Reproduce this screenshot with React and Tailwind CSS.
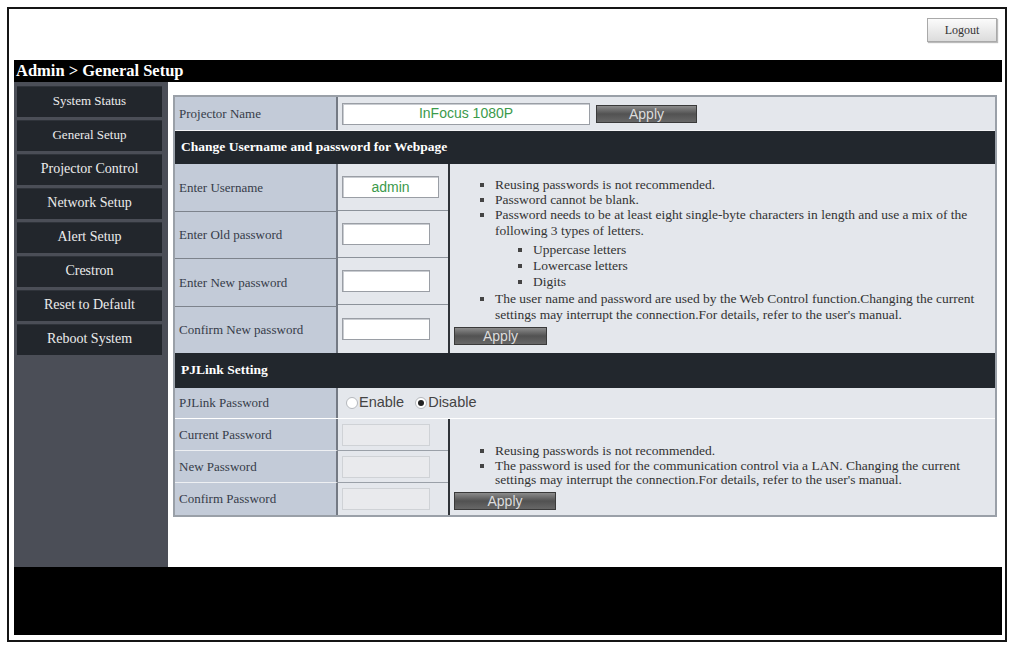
import React from "react";

const serif = { fontFamily: '"Liberation Serif", "Times New Roman", serif' };
const sans = { fontFamily: '"Liberation Sans", Arial, sans-serif' };

const menu = [
  { label: "System Status", size: "text-[13px]" },
  { label: "General Setup", size: "text-[13px]" },
  { label: "Projector Control", size: "text-[14px]" },
  { label: "Network Setup", size: "text-[14px]" },
  { label: "Alert Setup", size: "text-[14px]" },
  { label: "Crestron", size: "text-[14px]" },
  { label: "Reset to Default", size: "text-[14px]" },
  { label: "Reboot System", size: "text-[14px]" },
];

function ApplyButton({ w = "w-[101px]" }) {
  return (
    <button
      className={`${w} h-[18px] flex items-center justify-center text-[14px] leading-none text-[#dcdcdc] bg-gradient-to-b from-[#8c8c8c] via-[#525252] to-[#676767] border border-[#3a3a3a]`}
      style={sans}
    >
      Apply
    </button>
  );
}

function Label({ children, className = "" }) {
  return (
    <div
      className={`w-[163px] shrink-0 bg-[#c3cbd8] border-r-2 border-[#747a84] flex items-center pl-[4px] text-[13px] text-[#363c49] ${className}`}
      style={serif}
    >
      {children}
    </div>
  );
}

function TextBox({ value, w, disabled }) {
  return (
    <div
      className={`${w} h-[22px] flex items-center justify-center text-[14px] text-[#3b9a4b] border ${
        disabled
          ? "bg-[#e9eaed] border-[#cfd2d6]"
          : "bg-white border-[#9a9ea5] shadow-[inset_1px_1px_0_#c9ccd1]"
      }`}
      style={sans}
    >
      {value}
    </div>
  );
}

function Radio({ checked, label }) {
  return (
    <span className="flex items-center">
      <span className="w-[12px] h-[12px] rounded-full bg-white border border-[#b5b8bd] flex items-center justify-center">
        {checked && <span className="w-[6px] h-[6px] rounded-full bg-[#222]" />}
      </span>
      <span className="ml-[1px] text-[14.5px] text-[#444]" style={sans}>
        {label}
      </span>
    </span>
  );
}

function SectionHeader({ children, h }) {
  return (
    <div
      className={`${h} bg-[#22272d] flex items-center pl-[6px] text-[13.5px] font-bold text-white`}
      style={serif}
    >
      {children}
    </div>
  );
}

export default function App() {
  return (
    <div className="w-[1012px] h-[645px] bg-white relative">
      <div className="absolute left-[7px] top-[7px] w-[1000px] h-[635px] border-2 border-[#151515] flex flex-col pl-[5px] pr-[3px] pb-[5px]">
        {/* top strip with logout */}
        <div className="h-[51px] flex justify-end items-start pt-[9px] pr-[5px]">
          <button
            className="w-[70px] h-[24px] text-[12px] text-[#333] bg-gradient-to-b from-[#fbfbfb] to-[#dcdcdc] border border-[#a9a9a9] shadow-[1px_1px_1px_#bbb]"
            style={serif}
          >
            Logout
          </button>
        </div>

        {/* breadcrumb bar */}
        <div
          className="h-[22px] bg-black flex items-center pl-[2px] text-[16.5px] font-bold text-white"
          style={serif}
        >
          Admin &gt; General Setup
        </div>

        {/* body */}
        <div className="h-[485px] flex">
          {/* side menu */}
          <div className="w-[154px] bg-[#4b4e57] pt-[4px] pl-[3px] pr-[6px] flex flex-col gap-[3px]">
            {menu.map((m) => (
              <div
                key={m.label}
                className={`h-[31px] bg-[#22262c] border-t border-[#2f333a] flex items-center justify-center pb-[3px] text-[#ececec] ${m.size}`}
                style={serif}
              >
                {m.label}
              </div>
            ))}
          </div>

          {/* main panel */}
          <div className="flex-1 bg-white pt-[13px] pl-[5px]">
            <div className="w-[824px] border-2 border-[#9aa0a8] bg-[#f3f4f6] flex flex-col">
              {/* projector name */}
              <div className="h-[33px] flex">
                <Label>Projector Name</Label>
                <div className="flex-1 bg-[#e4e7ec] flex items-center pl-[4px] gap-[6px]">
                  <TextBox value="InFocus 1080P" w="w-[248px]" />
                  <ApplyButton />
                </div>
              </div>

              <div className="h-[1px]" />
              <SectionHeader h="h-[33px]">Change Username and password for Webpage</SectionHeader>

              {/* username / password block */}
              <div className="h-[189px] flex">
                <div className="flex flex-col">
                  {["Enter Username", "Enter Old password", "Enter New password", "Confirm New password"].map(
                    (t, i) => (
                      <Label
                        key={t}
                        className={`flex-1 h-[47px] ${i < 3 ? "border-b border-b-[#7d838c]" : ""}`}
                      >
                        {t}
                      </Label>
                    )
                  )}
                </div>
                <div className="w-[112px] shrink-0 bg-[#e4e7ec] border-r-2 border-[#2f3338] flex flex-col">
                  {[0, 1, 2, 3].map((i) => (
                    <div
                      key={i}
                      className={`h-[47px] flex items-center pl-[4px] ${
                        i < 3 ? "border-b border-[#8c929a]" : ""
                      }`}
                    >
                      {i === 0 ? (
                        <TextBox value="admin" w="w-[97px]" />
                      ) : (
                        <TextBox value="" w="w-[88px]" />
                      )}
                    </div>
                  ))}
                </div>
                <div className="flex-1 bg-[#e4e7ec] pt-[13px] pl-[4px] text-[13.5px] leading-[15.2px] text-[#333]" style={serif}>
                  <ul className="list-[square] pl-[41px] whitespace-nowrap marker:text-[#444]">
                    <li>Reusing passwords is not recommended.</li>
                    <li>Password cannot be blank.</li>
                    <li>
                      Password needs to be at least eight single-byte characters in length and use a mix of the
                      <br />
                      following 3 types of letters.
                      <ul className="list-[square] pl-[38px] mt-[4px] leading-[16.2px] pb-[1px]">
                        <li>Uppercase letters</li>
                        <li>Lowercase letters</li>
                        <li>Digits</li>
                      </ul>
                    </li>
                    <li>
                      The user name and password are used by the Web Control function.Changing the current
                      <br />
                      settings may interrupt the connection.For details, refer to the user's manual.
                    </li>
                  </ul>
                  <div className="mt-[5px]">
                    <ApplyButton w="w-[93px]" />
                  </div>
                </div>
              </div>

              <SectionHeader h="h-[35px]">PJLink Setting</SectionHeader>

              {/* pjlink password toggle */}
              <div className="h-[31px] flex border-b border-white">
                <Label>PJLink Password</Label>
                <div className="flex-1 bg-[#e4e7ec] flex items-center pl-[8px] gap-[11px]">
                  <Radio label="Enable" />
                  <Radio checked label="Disable" />
                </div>
              </div>

              {/* pjlink password block */}
              <div className="h-[96px] flex">
                <div className="flex flex-col">
                  {["Current Password", "New Password", "Confirm Password"].map((t, i) => (
                    <Label key={t} className={`h-[32px] ${i < 2 ? "border-b border-b-[#eef0f3]" : ""}`}>
                      {t}
                    </Label>
                  ))}
                </div>
                <div className="w-[112px] shrink-0 bg-[#e4e7ec] border-r-2 border-[#2f3338] flex flex-col">
                  {[0, 1, 2].map((i) => (
                    <div
                      key={i}
                      className={`h-[32px] flex items-center pl-[4px] ${i < 2 ? "border-b border-[#9aa0a8]" : ""}`}
                    >
                      <TextBox value="" w="w-[88px]" disabled />
                    </div>
                  ))}
                </div>
                <div className="flex-1 bg-[#e4e7ec] pt-[25px] pl-[4px] text-[13.5px] leading-[14.5px] text-[#333]" style={serif}>
                  <ul className="list-[square] pl-[41px] whitespace-nowrap marker:text-[#444]">
                    <li>Reusing passwords is not recommended.</li>
                    <li>
                      The password is used for the communication control via a LAN. Changing the current
                      <br />
                      settings may interrupt the connection.For details, refer to the user's manual.
                    </li>
                  </ul>
                  <div className="mt-[4px]">
                    <ApplyButton w="w-[102px]" />
                  </div>
                </div>
              </div>
            </div>
          </div>
        </div>

        {/* footer */}
        <div className="flex-1 bg-black" />
      </div>
    </div>
  );
}
